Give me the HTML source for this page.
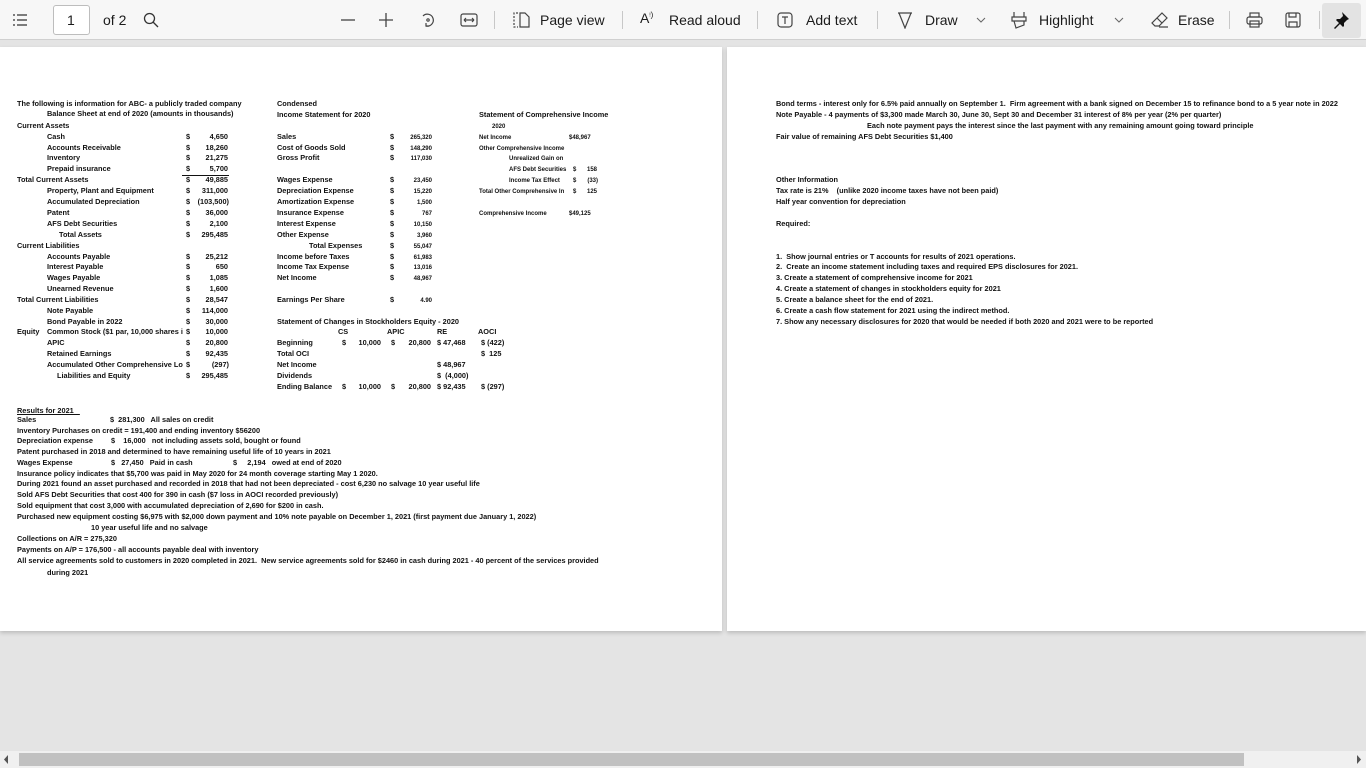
<!DOCTYPE html>
<html><head><meta charset="utf-8"><style>
*{margin:0;padding:0;box-sizing:border-box}
body{width:1366px;height:768px;overflow:hidden;background:#e4e4e4;position:relative;font-family:"Liberation Sans",sans-serif}
#tb{position:absolute;left:0;top:0;width:1366px;height:40px;background:#f7f7f7;border-bottom:1px solid #d0d0d0}
.tt{position:absolute;top:12px;font-size:14px;color:#1b1b1b;white-space:nowrap}
.sep{position:absolute;top:11px;width:1px;height:18px;background:#c8c8c8}
.ic{position:absolute}
.pg{position:absolute;background:#fff;box-shadow:0 2px 4px rgba(0,0,0,.18)}
.t{position:absolute;font-weight:bold;font-size:7.35px;line-height:8px;white-space:pre;color:#111}
.s{font-size:6px}
.r{text-align:right}
</style></head><body>
<div id="tb">
<svg class="ic" style="left:12px;top:12px" width="16" height="16" viewBox="0 0 16 16" fill="none" stroke="#333" stroke-width="1.2"><path d="M1 3h2M5 3h10M1 8h2M5 8h10M1 13h2M5 13h10"/></svg>
<div style="position:absolute;left:53px;top:5px;width:37px;height:30px;border:1px solid #bdbdbd;border-radius:3px;background:#fff"></div>
<div class="tt" style="left:67px">1</div>
<div class="tt" style="left:103px">of 2</div>
<svg class="ic" style="left:143px;top:12px" width="16" height="16" viewBox="0 0 16 16" fill="none" stroke="#333" stroke-width="1.3"><circle cx="6.5" cy="6.5" r="5"/><path d="M10 10l5 5"/></svg>
<svg class="ic" style="left:340px;top:12px" width="16" height="16" stroke="#444" stroke-width="1.3"><path d="M1 8h14"/></svg>
<svg class="ic" style="left:378px;top:12px" width="16" height="16" stroke="#444" stroke-width="1.3"><path d="M1 8h14M8 1v14"/></svg>
<svg class="ic" style="left:419px;top:11px" width="18" height="18" viewBox="0 0 18 18" fill="none" stroke="#444" stroke-width="1.2"><path d="M4 5a6 6 0 1 1 3 10"/><path d="M7 12l0 3 3 0"/><circle cx="9" cy="9" r="1.2"/></svg>
<svg class="ic" style="left:460px;top:12px" width="18" height="16" viewBox="0 0 18 16" fill="none" stroke="#444" stroke-width="1.2"><rect x="1" y="2" width="16" height="12" rx="2"/><path d="M4 8h10M4 8l2-2M4 8l2 2M14 8l-2-2M14 8l-2 2"/></svg>
<div class="sep" style="left:494px"></div>
<svg class="ic" style="left:512px;top:12px" width="18" height="16" viewBox="0 0 18 16" fill="none" stroke="#444" stroke-width="1.2"><path d="M6 1H2v14h4" stroke-dasharray="2 1.5"/><path d="M8 1h5l4 4v10H8z"/></svg>
<div class="tt" style="left:540px">Page view</div>
<div class="sep" style="left:622px"></div>
<div class="tt" style="left:640px;top:10px">A<sup style="font-size:8px">ᵎ)</sup></div>
<div class="tt" style="left:669px">Read aloud</div>
<div class="sep" style="left:757px"></div>
<svg class="ic" style="left:777px;top:12px" width="16" height="16" viewBox="0 0 16 16" fill="none" stroke="#444" stroke-width="1.2"><rect x="1" y="1" width="14" height="14" rx="3"/><path d="M5 5h6M8 5v7"/></svg>
<div class="tt" style="left:806px">Add text</div>
<div class="sep" style="left:877px"></div>
<svg class="ic" style="left:897px;top:11px" width="16" height="18" viewBox="0 0 16 18" fill="none" stroke="#444" stroke-width="1.2"><path d="M1 2h14M2 2l6 15 6-15"/></svg>
<div class="tt" style="left:925px">Draw</div>
<svg class="ic" style="left:976px;top:17px" width="10" height="6" fill="none" stroke="#666"><path d="M1 1l4 4 4-4"/></svg>
<svg class="ic" style="left:1011px;top:11px" width="16" height="18" viewBox="0 0 16 18" fill="none" stroke="#444" stroke-width="1.2"><path d="M3 1v5M13 1v5M1 6h14v4H1zM3 10l2 7 8-3v-4"/></svg>
<div class="tt" style="left:1039px">Highlight</div>
<svg class="ic" style="left:1114px;top:17px" width="10" height="6" fill="none" stroke="#666"><path d="M1 1l4 4 4-4"/></svg>
<svg class="ic" style="left:1151px;top:11px" width="18" height="18" viewBox="0 0 18 18" fill="none" stroke="#444" stroke-width="1.2"><path d="M11 2l5 5-8 8H4l-3-3zM6 7l5 5M8 16h9"/></svg>
<div class="tt" style="left:1178px">Erase</div>
<div class="sep" style="left:1229px"></div>
<svg class="ic" style="left:1246px;top:12px" width="17" height="16" viewBox="0 0 17 16" fill="none" stroke="#444" stroke-width="1.2"><rect x="4" y="1" width="9" height="4"/><rect x="1" y="5" width="15" height="7" rx="2"/><rect x="4" y="9" width="9" height="6"/></svg>
<svg class="ic" style="left:1285px;top:12px" width="16" height="16" viewBox="0 0 16 16" fill="none" stroke="#444" stroke-width="1.2"><rect x="1" y="1" width="14" height="14" rx="2"/><path d="M4 1v4h7V1M4 15v-5h8v5"/></svg>
<div class="sep" style="left:1319px"></div>
<div style="position:absolute;left:1322px;top:3px;width:39px;height:35px;background:#e3e3e3;border-radius:3px"></div>
<svg class="ic" style="left:1333px;top:11px" width="17" height="18" viewBox="0 0 17 18"><path d="M9 1l7 7-2 1-3 3 0 3-1 1-3-3-5 5-1-1 5-5-3-3 1-1 3 0 3-3z" fill="#111"/></svg>
</div>

<div class="pg" style="left:0;top:47px;width:722px;height:584px"></div>
<div class="pg" style="left:727px;top:47px;width:639px;height:584px"></div>

<div style="position:absolute;left:0;top:751px;width:1366px;height:17px;background:#f0f0f0"></div>
<div style="position:absolute;left:19px;top:753px;width:1225px;height:13px;background:#c1c1c1"></div>
<svg class="ic" style="left:3px;top:755px" width="6" height="9"><path d="M5 0v9L1 4.5z" fill="#555"/></svg>
<svg class="ic" style="left:1356px;top:755px" width="6" height="9"><path d="M1 0v9l4-4.5z" fill="#555"/></svg>

<!-- Balance sheet -->
<div class="t" style="left:17px;top:100px">The following is information for ABC- a publicly traded company</div>
<div class="t" style="left:47px;top:110px">Balance Sheet at end of 2020 (amounts in thousands)</div>
<div class="t" style="left:17px;top:122px">Current Assets</div>
<div class="t" style="left:47px;top:133px">Cash</div><div class="t" style="left:186px;top:133px">$</div><div class="t r" style="left:188px;width:40px;top:133px">4,650</div>
<div class="t" style="left:47px;top:144px">Accounts Receivable</div><div class="t" style="left:186px;top:144px">$</div><div class="t r" style="left:188px;width:40px;top:144px">18,260</div>
<div class="t" style="left:47px;top:154px">Inventory</div><div class="t" style="left:186px;top:154px">$</div><div class="t r" style="left:188px;width:40px;top:154px">21,275</div>
<div class="t" style="left:47px;top:165px">Prepaid insurance</div><div class="t" style="left:186px;top:165px">$</div><div class="t r" style="left:188px;width:40px;top:165px">5,700</div>
<div style="position:absolute;left:182px;top:175px;width:47px;height:1px;background:#111"></div>
<div class="t" style="left:17px;top:176px">Total Current Assets</div><div class="t" style="left:186px;top:176px">$</div><div class="t r" style="left:188px;width:40px;top:176px">49,885</div>
<div class="t" style="left:47px;top:187px">Property, Plant and Equipment</div><div class="t" style="left:186px;top:187px">$</div><div class="t r" style="left:188px;width:40px;top:187px">311,000</div>
<div class="t" style="left:47px;top:198px">Accumulated Depreciation</div><div class="t" style="left:186px;top:198px">$</div><div class="t r" style="left:188px;width:41px;top:198px">(103,500)</div>
<div class="t" style="left:47px;top:209px">Patent</div><div class="t" style="left:186px;top:209px">$</div><div class="t r" style="left:188px;width:40px;top:209px">36,000</div>
<div class="t" style="left:47px;top:220px">AFS Debt Securities</div><div class="t" style="left:186px;top:220px">$</div><div class="t r" style="left:188px;width:40px;top:220px">2,100</div>
<div class="t" style="left:59px;top:231px">Total Assets</div><div class="t" style="left:186px;top:231px">$</div><div class="t r" style="left:188px;width:40px;top:231px">295,485</div>
<div class="t" style="left:17px;top:242px">Current Liabilities</div>
<div class="t" style="left:47px;top:253px">Accounts Payable</div><div class="t" style="left:186px;top:253px">$</div><div class="t r" style="left:188px;width:40px;top:253px">25,212</div>
<div class="t" style="left:47px;top:263px">Interest Payable</div><div class="t" style="left:186px;top:263px">$</div><div class="t r" style="left:188px;width:40px;top:263px">650</div>
<div class="t" style="left:47px;top:274px">Wages Payable</div><div class="t" style="left:186px;top:274px">$</div><div class="t r" style="left:188px;width:40px;top:274px">1,085</div>
<div class="t" style="left:47px;top:285px">Unearned Revenue</div><div class="t" style="left:186px;top:285px">$</div><div class="t r" style="left:188px;width:40px;top:285px">1,600</div>
<div class="t" style="left:17px;top:296px">Total Current Liabilities</div><div class="t" style="left:186px;top:296px">$</div><div class="t r" style="left:188px;width:40px;top:296px">28,547</div>
<div class="t" style="left:47px;top:307px">Note Payable</div><div class="t" style="left:186px;top:307px">$</div><div class="t r" style="left:188px;width:40px;top:307px">114,000</div>
<div class="t" style="left:47px;top:318px">Bond Payable in 2022</div><div class="t" style="left:186px;top:318px">$</div><div class="t r" style="left:188px;width:40px;top:318px">30,000</div>
<div class="t" style="left:17px;top:328px">Equity</div><div class="t" style="left:47px;top:328px;width:137px;overflow:hidden">Common Stock ($1 par, 10,000 shares i</div><div class="t" style="left:186px;top:328px">$</div><div class="t r" style="left:188px;width:40px;top:328px">10,000</div>
<div class="t" style="left:47px;top:339px">APIC</div><div class="t" style="left:186px;top:339px">$</div><div class="t r" style="left:188px;width:40px;top:339px">20,800</div>
<div class="t" style="left:47px;top:350px">Retained Earnings</div><div class="t" style="left:186px;top:350px">$</div><div class="t r" style="left:188px;width:40px;top:350px">92,435</div>
<div class="t" style="left:47px;top:361px;width:137px;overflow:hidden">Accumulated Other Comprehensive Lo</div><div class="t" style="left:186px;top:361px">$</div><div class="t r" style="left:188px;width:41px;top:361px">(297)</div>
<div class="t" style="left:57px;top:372px">Liabilities and Equity</div><div class="t" style="left:186px;top:372px">$</div><div class="t r" style="left:188px;width:40px;top:372px">295,485</div>

<!-- Income statement -->
<div class="t" style="left:277px;top:100px">Condensed</div>
<div class="t" style="left:277px;top:111px">Income Statement for 2020</div>
<div class="t" style="left:277px;top:133px">Sales</div><div class="t" style="left:390px;top:133px">$</div><div class="t s r" style="left:400px;width:32px;top:134px">265,320</div>
<div class="t" style="left:277px;top:144px">Cost of Goods Sold</div><div class="t" style="left:390px;top:144px">$</div><div class="t s r" style="left:400px;width:32px;top:145px">148,290</div>
<div class="t" style="left:277px;top:154px">Gross Profit</div><div class="t" style="left:390px;top:154px">$</div><div class="t s r" style="left:400px;width:32px;top:155px">117,030</div>
<div class="t" style="left:277px;top:176px">Wages Expense</div><div class="t" style="left:390px;top:176px">$</div><div class="t s r" style="left:400px;width:32px;top:177px">23,450</div>
<div class="t" style="left:277px;top:187px">Depreciation Expense</div><div class="t" style="left:390px;top:187px">$</div><div class="t s r" style="left:400px;width:32px;top:188px">15,220</div>
<div class="t" style="left:277px;top:198px">Amortization Expense</div><div class="t" style="left:390px;top:198px">$</div><div class="t s r" style="left:400px;width:32px;top:199px">1,500</div>
<div class="t" style="left:277px;top:209px">Insurance Expense</div><div class="t" style="left:390px;top:209px">$</div><div class="t s r" style="left:400px;width:32px;top:210px">767</div>
<div class="t" style="left:277px;top:220px">Interest Expense</div><div class="t" style="left:390px;top:220px">$</div><div class="t s r" style="left:400px;width:32px;top:221px">10,150</div>
<div class="t" style="left:277px;top:231px">Other Expense</div><div class="t" style="left:390px;top:231px">$</div><div class="t s r" style="left:400px;width:32px;top:232px">3,960</div>
<div class="t" style="left:309px;top:242px">Total Expenses</div><div class="t" style="left:390px;top:242px">$</div><div class="t s r" style="left:400px;width:32px;top:243px">55,047</div>
<div class="t" style="left:277px;top:253px">Income before Taxes</div><div class="t" style="left:390px;top:253px">$</div><div class="t s r" style="left:400px;width:32px;top:254px">61,983</div>
<div class="t" style="left:277px;top:263px">Income Tax Expense</div><div class="t" style="left:390px;top:263px">$</div><div class="t s r" style="left:400px;width:32px;top:264px">13,016</div>
<div class="t" style="left:277px;top:274px">Net Income</div><div class="t" style="left:390px;top:274px">$</div><div class="t s r" style="left:400px;width:32px;top:275px">48,967</div>
<div class="t" style="left:277px;top:296px">Earnings Per Share</div><div class="t" style="left:390px;top:296px">$</div><div class="t s r" style="left:400px;width:32px;top:297px">4.90</div>

<!-- SCI -->
<div class="t" style="left:479px;top:111px">Statement of Comprehensive Income</div>
<div class="t s" style="left:492px;top:123px">2020</div>
<div class="t s" style="left:479px;top:134px">Net Income</div><div class="t s" style="left:569px;top:134px">$48,967</div>
<div class="t s" style="left:479px;top:145px">Other Comprehensive Income</div>
<div class="t s" style="left:509px;top:155px">Unrealized Gain on</div>
<div class="t s" style="left:509px;top:166px">AFS Debt Securities</div><div class="t s" style="left:573px;top:166px">$</div><div class="t s r" style="left:580px;width:17px;top:166px">158</div>
<div class="t s" style="left:509px;top:177px">Income Tax Effect</div><div class="t s" style="left:573px;top:177px">$</div><div class="t s r" style="left:580px;width:18px;top:177px">(33)</div>
<div class="t s" style="left:479px;top:188px;width:92px;overflow:hidden">Total Other Comprehensive In</div><div class="t s" style="left:573px;top:188px">$</div><div class="t s r" style="left:580px;width:17px;top:188px">125</div>
<div class="t s" style="left:479px;top:210px">Comprehensive Income</div><div class="t s" style="left:569px;top:210px">$49,125</div>

<!-- Changes in equity -->
<div class="t" style="left:277px;top:318px">Statement of Changes in Stockholders Equity - 2020</div>
<div class="t" style="left:338px;top:328px">CS</div><div class="t" style="left:387px;top:328px">APIC</div><div class="t" style="left:437px;top:328px">RE</div><div class="t" style="left:478px;top:328px">AOCI</div>
<div class="t" style="left:277px;top:339px">Beginning</div>
<div class="t" style="left:342px;top:339px">$</div><div class="t r" style="left:350px;width:31px;top:339px">10,000</div><div class="t" style="left:391px;top:339px">$</div><div class="t r" style="left:400px;width:31px;top:339px">20,800</div><div class="t" style="left:437px;top:339px">$ 47,468</div><div class="t" style="left:481px;top:339px">$ (422)</div>
<div class="t" style="left:277px;top:350px">Total OCI</div><div class="t" style="left:481px;top:350px">$  125</div>
<div class="t" style="left:277px;top:361px">Net Income</div><div class="t" style="left:437px;top:361px">$ 48,967</div>
<div class="t" style="left:277px;top:372px">Dividends</div><div class="t" style="left:437px;top:372px">$  (4,000)</div>
<div class="t" style="left:277px;top:383px">Ending Balance</div>
<div class="t" style="left:342px;top:383px">$</div><div class="t r" style="left:350px;width:31px;top:383px">10,000</div><div class="t" style="left:391px;top:383px">$</div><div class="t r" style="left:400px;width:31px;top:383px">20,800</div><div class="t" style="left:437px;top:383px">$ 92,435</div><div class="t" style="left:481px;top:383px">$ (297)</div>

<!-- Results -->
<div class="t" style="left:17px;top:407px;text-decoration:underline">Results for 2021   </div>
<div class="t" style="left:17px;top:416px">Sales</div><div class="t" style="left:110px;top:416px">$  281,300   All sales on credit</div>
<div class="t" style="left:17px;top:427px">Inventory Purchases on credit = 191,400 and ending inventory $56200</div>
<div class="t" style="left:17px;top:437px">Depreciation expense</div><div class="t" style="left:111px;top:437px">$    16,000   not including assets sold, bought or found</div>
<div class="t" style="left:17px;top:448px">Patent purchased in 2018 and determined to have remaining useful life of 10 years in 2021</div>
<div class="t" style="left:17px;top:459px">Wages Expense</div><div class="t" style="left:111px;top:459px">$   27,450   Paid in cash</div><div class="t" style="left:233px;top:459px">$     2,194   owed at end of 2020</div>
<div class="t" style="left:17px;top:470px">Insurance policy indicates that $5,700 was paid in May 2020 for 24 month coverage starting May 1 2020.</div>
<div class="t" style="left:17px;top:480px">During 2021 found an asset purchased and recorded in 2018 that had not been depreciated - cost 6,230 no salvage 10 year useful life</div>
<div class="t" style="left:17px;top:491px">Sold AFS Debt Securities that cost 400 for 390 in cash ($7 loss in AOCI recorded previously)</div>
<div class="t" style="left:17px;top:502px">Sold equipment that cost 3,000 with accumulated depreciation of 2,690 for $200 in cash.</div>
<div class="t" style="left:17px;top:513px">Purchased new equipment costing $6,975 with $2,000 down payment and 10% note payable on December 1, 2021 (first payment due January 1, 2022)</div>
<div class="t" style="left:91px;top:524px">10 year useful life and no salvage</div>
<div class="t" style="left:17px;top:535px">Collections on A/R = 275,320</div>
<div class="t" style="left:17px;top:546px">Payments on A/P = 176,500 - all accounts payable deal with inventory</div>
<div class="t" style="left:17px;top:557px">All service agreements sold to customers in 2020 completed in 2021.  New service agreements sold for $2460 in cash during 2021 - 40 percent of the services provided</div>
<div class="t" style="left:47px;top:569px">during 2021</div>

<!-- Page 2 -->
<div class="t" style="left:776px;top:100px">Bond terms - interest only for 6.5% paid annually on September 1.  Firm agreement with a bank signed on December 15 to refinance bond to a 5 year note in 2022</div>
<div class="t" style="left:776px;top:111px">Note Payable - 4 payments of $3,300 made March 30, June 30, Sept 30 and December 31 interest of 8% per year (2% per quarter)</div>
<div class="t" style="left:867px;top:122px">Each note payment pays the interest since the last payment with any remaining amount going toward principle</div>
<div class="t" style="left:776px;top:133px">Fair value of remaining AFS Debt Securities $1,400</div>
<div class="t" style="left:776px;top:176px">Other Information</div>
<div class="t" style="left:776px;top:187px">Tax rate is 21%    (unlike 2020 income taxes have not been paid)</div>
<div class="t" style="left:776px;top:198px">Half year convention for depreciation</div>
<div class="t" style="left:776px;top:220px">Required:</div>
<div class="t" style="left:776px;top:253px">1.  Show journal entries or T accounts for results of 2021 operations.</div>
<div class="t" style="left:776px;top:263px">2.  Create an income statement including taxes and required EPS disclosures for 2021.</div>
<div class="t" style="left:776px;top:274px">3. Create a statement of comprehensive income for 2021</div>
<div class="t" style="left:776px;top:285px">4. Create a statement of changes in stockholders equity for 2021</div>
<div class="t" style="left:776px;top:296px">5. Create a balance sheet for the end of 2021.</div>
<div class="t" style="left:776px;top:307px">6. Create a cash flow statement for 2021 using the indirect method.</div>
<div class="t" style="left:776px;top:318px">7. Show any necessary disclosures for 2020 that would be needed if both 2020 and 2021 were to be reported</div>
</body></html>
